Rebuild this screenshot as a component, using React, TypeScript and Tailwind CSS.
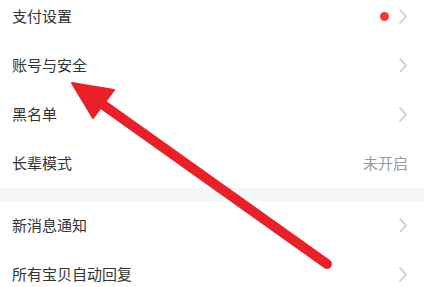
import React from "react";

const Chevron = () => (
  <svg width="10" height="17" viewBox="0 0 10 17" className="shrink-0">
    <path d="M2 2 L8 8.5 L2 15" fill="none" stroke="#c9c9c9" strokeWidth="1.6" strokeLinecap="round" strokeLinejoin="round" />
  </svg>
);

const Row = ({ label, right }: { label: string; right?: React.ReactNode }) => (
  <div className="h-[49px] flex items-center justify-between pl-3 pr-4">
    <span className="text-[15px] text-[#333333]">{label}</span>
    <div className="flex items-center gap-[9px]">{right}</div>
  </div>
);

export default function App() {
  return (
    <div
      className="relative w-[424px] h-[287px] overflow-hidden bg-white"
      style={{ fontFamily: '"Noto Sans CJK SC", "Noto Sans", sans-serif' }}
    >
      <div className="-mt-[8px] flex flex-col">
        <Row
          label="支付设置"
          right={
            <>
              <span className="w-[9px] h-[9px] rounded-full bg-[#ee3b3b]" />
              <Chevron />
            </>
          }
        />
        <Row label="账号与安全" right={<Chevron />} />
        <Row label="黑名单" right={<Chevron />} />
        <Row label="长辈模式" right={<span className="text-[15px] text-[#999999]">未开启</span>} />
        <div className="h-[13px] bg-[#f5f6f8]" />
        <Row label="新消息通知" right={<Chevron />} />
        <Row label="所有宝贝自动回复" right={<Chevron />} />
      </div>
      <svg className="absolute left-0 top-0 pointer-events-none" width="424" height="287" viewBox="0 0 424 287">
        <line x1="102" y1="104" x2="327" y2="264" stroke="#e8202a" strokeWidth="10" strokeLinecap="round" />
        <polygon points="72,83 114,90 93,118" fill="#e8202a" stroke="#e8202a" strokeWidth="2" strokeLinejoin="round" />
      </svg>
    </div>
  );
}
